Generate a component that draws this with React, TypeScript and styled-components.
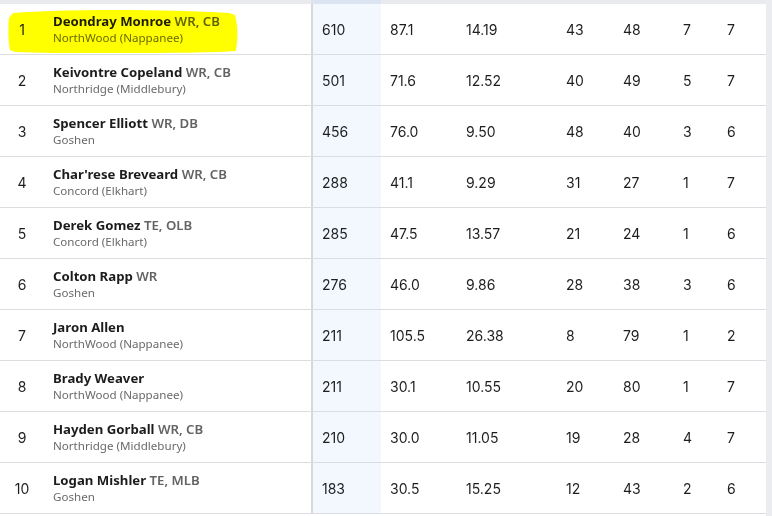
import React from "react";
import styled, { createGlobalStyle } from "styled-components";

const GlobalStyle = createGlobalStyle`
  html, body {
    margin: 0;
    padding: 0;
    background: #ebecf0;
  }
  * {
    box-sizing: border-box;
  }
`;

const COLUMNS = "44px 267px 70px 76px 100px 57px 60px 44px 48px";

const Page = styled.div`
  width: 772px;
  height: 516px;
  overflow: hidden;
  background: #ebecf0;
`;

const TableWrap = styled.div`
  position: relative;
  width: 766px;
`;

const HeaderStrip = styled.div`
  display: grid;
  grid-template-columns: ${COLUMNS};
  height: 4px;
  background: #e9eaee;
`;

const HeaderCell = styled.div<{ $sorted?: boolean; $divider?: boolean }>`
  background: ${({ $sorted }) => ($sorted ? "#dce4f4" : "transparent")};
  border-left: ${({ $divider }) => ($divider ? "2px solid #e2e3e7" : "none")};
`;

const Row = styled.div`
  display: grid;
  grid-template-columns: ${COLUMNS};
  height: 51px;
  background: #ffffff;
  border-bottom: 1px solid #dcdde1;
`;

const RankCell = styled.div`
  display: flex;
  align-items: center;
  justify-content: center;
  font-family: Inter, "Liberation Sans", sans-serif;
  font-size: 14px;
  color: #1e1e1e;
`;

const NameCell = styled.div`
  display: flex;
  flex-direction: column;
  justify-content: center;
  padding-left: 9px;
  font-family: "Noto Sans", "Liberation Sans", sans-serif;
`;

const NameLine = styled.div`
  font-size: 13.2px;
  font-weight: 700;
  line-height: 17px;
  color: #1c1c1c;
`;

const Position = styled.span`
  font-weight: 600;
  color: #636363;
`;

const School = styled.div`
  font-size: 11.6px;
  line-height: 16px;
  color: #6a6a6a;
`;

const StatCell = styled.div<{ $sorted?: boolean; $divider?: boolean }>`
  display: flex;
  align-items: center;
  padding-left: 9px;
  background: ${({ $sorted }) => ($sorted ? "#f3f7fe" : "transparent")};
  border-left: ${({ $divider }) => ($divider ? "2px solid #d6d8dc" : "none")};
  font-family: Inter, "Liberation Sans", sans-serif;
  font-size: 14px;
  color: #1e1e1e;
`;

const Marker = styled.svg`
  position: absolute;
  left: 7px;
  top: 8px;
  width: 234px;
  height: 47px;
  mix-blend-mode: multiply;
  pointer-events: none;
`;

type Player = {
  name: string;
  pos?: string;
  school: string;
  stats: string[];
};

const players: Player[] = [
  { name: "Deondray Monroe", pos: "WR, CB", school: "NorthWood (Nappanee)", stats: ["610", "87.1", "14.19", "43", "48", "7", "7"] },
  { name: "Keivontre Copeland", pos: "WR, CB", school: "Northridge (Middlebury)", stats: ["501", "71.6", "12.52", "40", "49", "5", "7"] },
  { name: "Spencer Elliott", pos: "WR, DB", school: "Goshen", stats: ["456", "76.0", "9.50", "48", "40", "3", "6"] },
  { name: "Char'rese Breveard", pos: "WR, CB", school: "Concord (Elkhart)", stats: ["288", "41.1", "9.29", "31", "27", "1", "7"] },
  { name: "Derek Gomez", pos: "TE, OLB", school: "Concord (Elkhart)", stats: ["285", "47.5", "13.57", "21", "24", "1", "6"] },
  { name: "Colton Rapp", pos: "WR", school: "Goshen", stats: ["276", "46.0", "9.86", "28", "38", "3", "6"] },
  { name: "Jaron Allen", school: "NorthWood (Nappanee)", stats: ["211", "105.5", "26.38", "8", "79", "1", "2"] },
  { name: "Brady Weaver", school: "NorthWood (Nappanee)", stats: ["211", "30.1", "10.55", "20", "80", "1", "7"] },
  { name: "Hayden Gorball", pos: "WR, CB", school: "Northridge (Middlebury)", stats: ["210", "30.0", "11.05", "19", "28", "4", "7"] },
  { name: "Logan Mishler", pos: "TE, MLB", school: "Goshen", stats: ["183", "30.5", "15.25", "12", "43", "2", "6"] },
];

const App = () => {
  return (
    <Page>
      <GlobalStyle />
      <TableWrap>
        <HeaderStrip>
          <HeaderCell />
          <HeaderCell />
          <HeaderCell $sorted $divider />
          {Array.from({ length: 6 }).map((_, i) => (
            <HeaderCell key={i} />
          ))}
        </HeaderStrip>
        {players.map((p, i) => (
          <Row key={p.name}>
            <RankCell>{i + 1}</RankCell>
            <NameCell>
              <NameLine>
                {p.name}
                {p.pos && <Position> {p.pos}</Position>}
              </NameLine>
              <School>{p.school}</School>
            </NameCell>
            {p.stats.map((s, j) => (
              <StatCell key={j} $sorted={j === 0} $divider={j === 0}>
                {s}
              </StatCell>
            ))}
          </Row>
        ))}
        <Row />
        {/* highlighter mark over the first player */}
        <Marker viewBox="0 0 234 47">
          <path
            d="M6 5 C30 3 70 2 110 2 C150 2 190 3 222 5 L228 7 C230 14 231 24 230 34 L229 43 C200 45 150 45 100 45 C60 45 30 45 8 44 L3 42 C1 34 1 20 2 10 Z"
            fill="#ffff00"
          />
        </Marker>
      </TableWrap>
    </Page>
  );
};

export default App;
